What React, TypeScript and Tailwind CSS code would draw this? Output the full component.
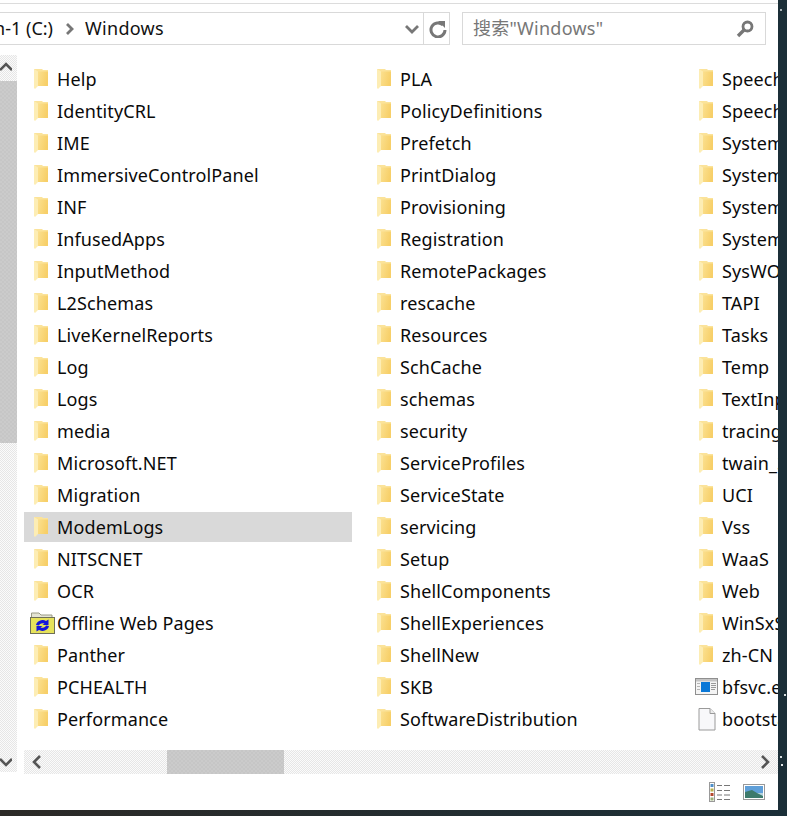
const col1 = ["Help", "IdentityCRL", "IME", "ImmersiveControlPanel", "INF", "InfusedApps", "InputMethod", "L2Schemas", "LiveKernelReports", "Log", "Logs", "media", "Microsoft.NET", "Migration", "ModemLogs", "NITSCNET", "OCR", "Offline Web Pages", "Panther", "PCHEALTH", "Performance"];
const col2 = ["PLA", "PolicyDefinitions", "Prefetch", "PrintDialog", "Provisioning", "Registration", "RemotePackages", "rescache", "Resources", "SchCache", "schemas", "security", "ServiceProfiles", "ServiceState", "servicing", "Setup", "ShellComponents", "ShellExperiences", "ShellNew", "SKB", "SoftwareDistribution"];
const col3 = ["Speech", "Speech_OneCore", "System", "System32", "SystemApps", "SystemResources", "SysWOW64", "TAPI", "Tasks", "Temp", "TextInput", "tracing", "twain_32", "UCI", "Vss", "WaaS", "Web", "WinSxS", "zh-CN", "bfsvc.exe", "bootstat.dat"];

const trackBg = "bg-[repeating-conic-gradient(#e6e6e6_0_25%,#fbfbfb_0_50%)] bg-[length:2px_2px]";
const thumbBg = "bg-[repeating-conic-gradient(#c6c6c6_0_25%,#cbcbcb_0_50%)] bg-[length:4px_4px]";

function FolderIcon() {
  return (
    <svg width="16" height="22" viewBox="0 0 16 22" className="shrink-0">
      <defs>
        <linearGradient id="folderBody" x1="0" y1="0" x2="1" y2="0.3">
          <stop offset="0" stopColor="#fbe08f" />
          <stop offset="1" stopColor="#f7cf68" />
        </linearGradient>
      </defs>
      <path d="M0 1 H8 L9 2 H14 V18 H4 Z" fill="#fbe39a" />
      <path d="M4 3.5 H14 V18 H4 Z" fill="url(#folderBody)" />
      <path d="M0 1 L4 3.5 V18 L1 21 L0 20 Z" fill="#fdedb4" />
    </svg>
  );
}

function SyncFolderIcon() {
  return (
    <svg width="26" height="25" viewBox="0 0 26 25" className="shrink-0">
      <path d="M1.5 6 V2 H9 L11 4 H22 V7" fill="#e4e4d4" stroke="#9a9a84" />
      <rect x="0.5" y="6.5" width="24" height="16" fill="#e6e25a" stroke="#6f6f58" />
      <path d="M6 14 A6.5 5.5 0 0 1 16 10 L18.5 8.5 L18.5 14 L12.5 14 L14.5 12.5 A4 3 0 0 0 9 14.5 Z" fill="#1414dc" />
      <path d="M19 15 A6.5 5.5 0 0 1 9 19 L6.5 20.5 L6.5 15 L12.5 15 L10.5 16.5 A4 3 0 0 0 16 14.5 Z" fill="#1414dc" />
    </svg>
  );
}

function ExeIcon() {
  return (
    <svg width="23" height="18" viewBox="0 0 23 18" className="shrink-0">
      <rect x="0.5" y="0.5" width="22" height="16" fill="#f4f4f4" stroke="#8f8f8f" />
      <rect x="1" y="1" width="21" height="2.5" fill="#c4c4c4" />
      <rect x="6" y="4" width="9" height="10" fill="#0a78d7" />
      <path d="M16 5.5h5M16 7.5h5M16 9.5h5M16 11.5h4" stroke="#9a9a9a" />
      <path d="M2 5.5h3M2 8.5h3M2 11.5h3" stroke="#b5b5b5" />
    </svg>
  );
}

function FileIcon() {
  return (
    <svg width="18" height="23" viewBox="0 0 18 23" className="shrink-0">
      <path d="M1 .5 H12 L17 5.5 V22 H1 Z" fill="#f8f8fa" stroke="#9a9a9a" />
      <path d="M12 .5 V5.5 H17" fill="#ececec" stroke="#9a9a9a" />
    </svg>
  );
}

function Row({ name, selected }: { name: string; selected?: boolean }) {
  let icon = <FolderIcon />;
  let iconBox = "pl-[10px] w-[33px]";
  if (name === "Offline Web Pages") {
    icon = <SyncFolderIcon />;
    iconBox = "pl-[6px] w-[33px]";
  }
  if (name === "bfsvc.exe") {
    icon = <ExeIcon />;
    iconBox = "pl-[6px] w-[33px]";
  }
  if (name === "bootstat.dat") {
    icon = <FileIcon />;
    iconBox = "pl-[9px] w-[33px]";
  }
  return (
    <div className={`flex items-center h-[30px] w-full ${selected ? "bg-[#d9d9d9]" : ""}`}>
      <div className={iconBox}>{icon}</div>
      <span className="whitespace-nowrap text-[18px] tracking-[0.12px] text-[#0a0a0a]">{name}</span>
    </div>
  );
}

function Column({ items, className }: { items: string[]; className: string }) {
  return (
    <div className={`flex flex-col gap-[2px] shrink-0 ${className}`}>
      {items.map((n) => (
        <Row key={n} name={n} selected={n === "ModemLogs"} />
      ))}
    </div>
  );
}

export default function App() {
  return (
    <div className="w-[787px] h-[816px] overflow-hidden bg-[radial-gradient(circle_at_785px_695px,#d5dde0_0,#d5dde0_1px,transparent_1.5px),radial-gradient(circle_at_781px_757px,#d5dde0_0,#d5dde0_1px,transparent_1.5px),radial-gradient(circle_at_782px_765px,#e5e9ea_0,#e5e9ea_1px,transparent_1.5px),radial-gradient(circle_at_781px_10px,#aab4b8_0,#aab4b8_1px,transparent_1.5px),linear-gradient(to_right,#2c2a27,#1b2f38)] font-['Noto_Sans','Noto_Sans_CJK_SC',sans-serif]">
      <div className="w-[778px] h-[810px] bg-white flex flex-col overflow-hidden">
        <div className="h-[4px] border-b border-[#dcdcdc] shrink-0" />

        {/* address bar */}
        <div className="flex mt-[8px] h-[33px] shrink-0">
          <div className="w-[450px] flex items-center border-y border-r border-[#d9d9d9] overflow-hidden">
            <div className="w-[404px] flex items-center justify-end pr-[240px] text-[18px] text-[#111] whitespace-nowrap">
              <span>n-1 (C:)</span>
              <svg width="10" height="12" viewBox="0 0 10 12" className="ml-[12px] mr-[10px] shrink-0">
                <path d="M2 1 L7 6 L2 11" fill="none" stroke="#777" strokeWidth="2.8" />
              </svg>
              <span className="tracking-[0.3px]">Windows</span>
            </div>
            <svg width="14" height="10" viewBox="0 0 14 10" className="ml-[1px] shrink-0">
              <path d="M1 2 L7 8 L13 2" fill="none" stroke="#777" strokeWidth="2.8" />
            </svg>
            <div className="ml-[4px] h-full border-l border-[#d9d9d9] flex items-center pl-[5px]">
              <svg width="18" height="18" viewBox="0 0 18 18">
                <path d="M14 5 A7 7 0 1 0 16 10" fill="none" stroke="#777" strokeWidth="3" />
                <path d="M9 1 L16 1 L16 8 Z" fill="#777" />
              </svg>
            </div>
          </div>
          <div className="ml-[12px] w-[304px] border border-[#d9d9d9] flex items-center pl-[10px] pr-[11px] justify-between">
            <span className="text-[18px] tracking-[0.25px] text-[#777] whitespace-nowrap">搜索"Windows"</span>
            <svg width="18" height="18" viewBox="0 0 18 18">
              <circle cx="11.5" cy="6.5" r="4.5" fill="none" stroke="#777" strokeWidth="2.8" />
              <path d="M8 10 L2 16" stroke="#777" strokeWidth="3.4" />
            </svg>
          </div>
        </div>

        {/* body */}
        <div className="flex-1 flex mt-[10px] min-h-0">
          <div className={`w-[17px] h-[717px] shrink-0 flex flex-col justify-between ${trackBg}`}>
            <div>
              <div className="h-[26px] flex items-center pb-[2px]">
                <svg width="12" height="10" viewBox="0 0 12 10">
                  <path d="M0 8 L6 2 L12 8" fill="none" stroke="#555" strokeWidth="2.6" />
                </svg>
              </div>
              <div className={`h-[362px] ${thumbBg}`} />
            </div>
            <div className="h-[26px] flex items-center pt-[6px]">
              <svg width="12" height="10" viewBox="0 0 12 10">
                <path d="M0 2 L6 8 L12 2" fill="none" stroke="#555" strokeWidth="2.6" />
              </svg>
            </div>
          </div>

          <div className="flex-1 min-w-0 ml-[7px] flex flex-col">
            <div className="h-[695px] pt-[9px] overflow-hidden flex">
              <Column items={col1} className="w-[328px] mr-[15px]" />
              <Column items={col2} className="w-[307px] mr-[15px]" />
              <Column items={col3} className="w-[200px]" />
            </div>
            <div className={`h-[24px] flex items-center justify-between shrink-0 ${trackBg}`}>
              <div className="flex items-center h-full">
                <div className="w-[143px] flex items-center pl-[8px]">
                  <svg width="10" height="14" viewBox="0 0 10 14">
                    <path d="M8 1 L2 7 L8 13" fill="none" stroke="#555" strokeWidth="2.6" />
                  </svg>
                </div>
                <div className={`w-[117px] h-full ${thumbBg}`} />
              </div>
              <svg width="10" height="14" viewBox="0 0 10 14" className="mr-[8px]">
                <path d="M2 1 L8 7 L2 13" fill="none" stroke="#555" strokeWidth="2.6" />
              </svg>
            </div>
            <div className="h-[36px] shrink-0 flex items-center justify-end pr-[13px] gap-[12px]">
              <svg width="22" height="20" viewBox="0 0 22 20">
                <rect x="0.5" y="0.5" width="5" height="19" fill="#fff" stroke="#999" />
                <rect x="1.5" y="2" width="3" height="3" fill="#4f8fc9" />
                <rect x="1.5" y="6.5" width="3" height="3" fill="#b8b04a" />
                <rect x="1.5" y="11" width="3" height="3" fill="#b5482e" />
                <rect x="1.5" y="15.5" width="3" height="3" fill="#9ab07a" />
                <path d="M8 3.5h5M15 3.5h6M8 8.5h5M15 8.5h6M8 13h5M15 13h6M8 17.5h5M15 17.5h6" stroke="#777" />
              </svg>
              <svg width="22" height="16" viewBox="0 0 22 16">
                <rect x="0.5" y="0.5" width="21" height="15" fill="#fff" stroke="#999" />
                <rect x="2" y="2" width="18" height="7" fill="#5f9fd8" />
                <rect x="2" y="9" width="18" height="5" fill="#b5d3de" />
                <path d="M2 8 L9 6 L14 9 L20 12 V14 H2 Z" fill="#3d7a6b" />
              </svg>
            </div>
          </div>
        </div>
      </div>
    </div>
  );
}
